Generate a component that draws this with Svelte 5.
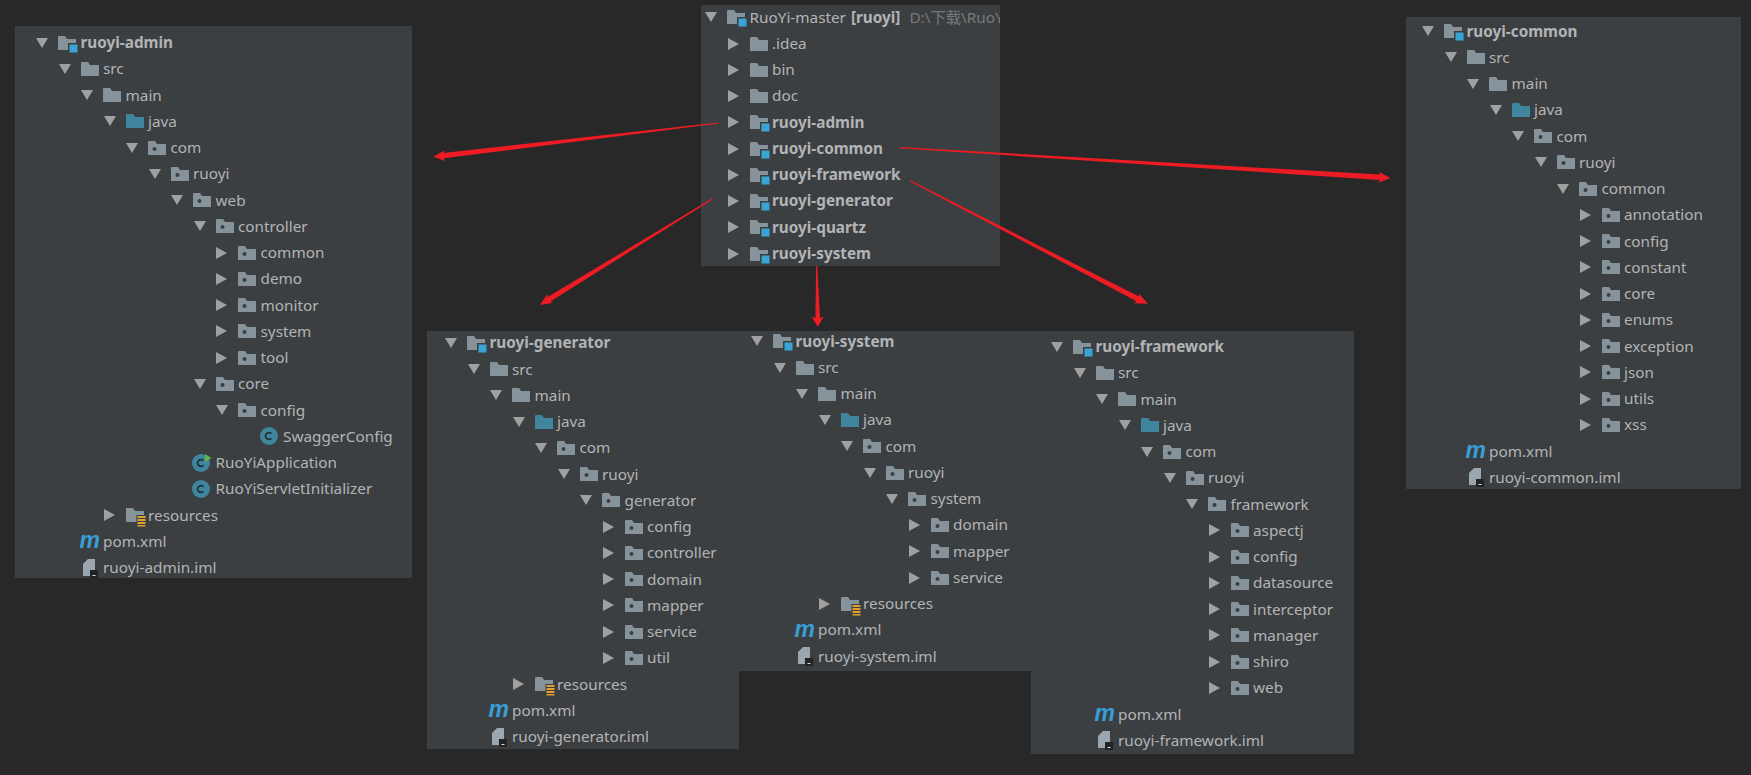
<script>
  const head = (name, pkg) => [
    [0, 'd', 'module', name, true],
    [1, 'd', 'folder', 'src'],
    [2, 'd', 'folder', 'main'],
    [3, 'd', 'java', 'java'],
    [4, 'd', 'pkg', 'com'],
    [5, 'd', 'pkg', 'ruoyi'],
    [6, 'd', 'pkg', pkg]
  ];
  const pkgs = (names) => names.map((n) => [7, 'r', 'pkg', n]);
  const tail = (name) => [
    [1, '', 'pom', 'pom.xml'],
    [1, '', 'iml', name + '.iml']
  ];
  const res = [3, 'r', 'res', 'resources'];

  const panels = [
    {
      id: 'admin',
      rows: [
        ...head('ruoyi-admin', 'web'),
        [7, 'd', 'pkg', 'controller'],
        ...['common', 'demo', 'monitor', 'system', 'tool'].map((n) => [8, 'r', 'pkg', n]),
        [7, 'd', 'pkg', 'core'],
        [8, 'd', 'pkg', 'config'],
        [9, '', 'class', 'SwaggerConfig'],
        [6, '', 'run', 'RuoYiApplication'],
        [6, '', 'class', 'RuoYiServletInitializer'],
        res,
        ...tail('ruoyi-admin')
      ]
    },
    {
      id: 'master',
      rows: [
        [0, 'd', 'module', 'RuoYi-master', false, '[ruoyi]', 'D:\\下载\\RuoYi-master'],
        [1, 'r', 'folder', '.idea'],
        [1, 'r', 'folder', 'bin'],
        [1, 'r', 'folder', 'doc'],
        ...['admin', 'common', 'framework', 'generator', 'quartz', 'system'].map((n) => [
          1, 'r', 'module', 'ruoyi-' + n, true
        ])
      ]
    },
    {
      id: 'common',
      rows: [
        ...head('ruoyi-common', 'common'),
        ...pkgs(['annotation', 'config', 'constant', 'core', 'enums', 'exception', 'json', 'utils', 'xss']),
        ...tail('ruoyi-common')
      ]
    },
    {
      id: 'generator',
      rows: [
        ...head('ruoyi-generator', 'generator'),
        ...pkgs(['config', 'controller', 'domain', 'mapper', 'service', 'util']),
        res,
        ...tail('ruoyi-generator')
      ]
    },
    {
      id: 'system',
      rows: [
        ...head('ruoyi-system', 'system'),
        ...pkgs(['domain', 'mapper', 'service']),
        res,
        ...tail('ruoyi-system')
      ]
    },
    {
      id: 'framework',
      rows: [
        ...head('ruoyi-framework', 'framework'),
        ...pkgs(['aspectj', 'config', 'datasource', 'interceptor', 'manager', 'shiro', 'web']),
        ...tail('ruoyi-framework')
      ]
    }
  ];

  const arrow = (s, t, b1, b2, w) => {
    const mid = [(b1[0] + b2[0]) / 2, (b1[1] + b2[1]) / 2];
    const neck = [mid[0] + (t[0] - mid[0]) * 0.12, mid[1] + (t[1] - mid[1]) * 0.12];
    const len = Math.hypot(t[0] - s[0], t[1] - s[1]);
    let p = [-(t[1] - s[1]) / len, (t[0] - s[0]) / len];
    if ((b1[0] - mid[0]) * p[0] + (b1[1] - mid[1]) * p[1] < 0) p = [-p[0], -p[1]];
    const at = (o, k) => `${(o[0] + p[0] * k).toFixed(1)},${(o[1] + p[1] * k).toFixed(1)}`;
    return [
      at(s, 0.6), at(neck, w), `${b1[0]},${b1[1]}`, `${t[0]},${t[1]}`, `${b2[0]},${b2[1]}`, at(neck, -w), at(s, -0.6)
    ].join(' ');
  };

  const arrows = [
    arrow([718.3, 123], [433.3, 156.7], [445, 150], [445, 161], 2.7),
    arrow([712.7, 198.7], [540, 305], [547.3, 294.3], [553.3, 302.7], 2.6),
    arrow([816.7, 265.7], [817.7, 326.7], [811.7, 316.7], [823.7, 316.7], 2.3),
    arrow([899.6, 147.7], [1390.5, 178], [1379, 171.7], [1378.5, 182.7], 2.7),
    arrow([910, 180.7], [1148, 303.7], [1138.6, 293.3], [1134, 303.3], 2.6)
  ];

  const folderPath = 'M0 1Q0 0 1 0H7L9 3H18V14H0Z';
</script>

<div class="canvas">
  {#each panels as panel}
    <section class="panel {panel.id}">
      <div class="tree">
        {#each panel.rows as [depth, toggle, kind, label, bold, tag, path]}
          <div class="row" style="--depth: {depth}">
            <span class="toggle">
              {#if toggle === 'd'}
                <svg width="12" height="10" viewBox="0 0 12 10"><path d="M0 0H12L6 10Z" /></svg>
              {:else if toggle === 'r'}
                <svg width="11" height="12" viewBox="0 0 11 12"><path d="M0 0L11 6L0 12Z" /></svg>
              {/if}
            </span>
            <span class="icon">
              {#if kind === 'folder'}
                <svg width="18" height="14" viewBox="0 0 18 14"><path class="fold" d={folderPath} /></svg>
              {:else if kind === 'java'}
                <svg width="18" height="14" viewBox="0 0 18 14"><path class="fold-java" d={folderPath} /></svg>
              {:else if kind === 'pkg'}
                <svg width="18" height="14" viewBox="0 0 18 14">
                  <path class="fold" d={folderPath} />
                  <circle class="hole" cx="6.5" cy="8" r="2" />
                </svg>
              {:else if kind === 'module'}
                <svg class="big" width="20" height="19" viewBox="0 0 20 19">
                  <path class="fold" d={folderPath} />
                  <rect class="hole" x="10" y="7" width="10" height="10" />
                  <rect class="mod" x="11.5" y="8.5" width="8" height="8" />
                </svg>
              {:else if kind === 'res'}
                <svg class="big" width="20" height="19" viewBox="0 0 20 19">
                  <path class="fold" d={folderPath} />
                  <rect class="hole" x="10.5" y="7" width="9.5" height="11" />
                  <rect class="stack" x="11.5" y="8" width="8" height="2" />
                  <rect class="stack" x="11.5" y="11" width="8" height="2" />
                  <rect class="stack" x="11.5" y="14" width="8" height="2" />
                  <rect class="stack" x="11.5" y="17" width="8" height="1.5" />
                </svg>
              {:else if kind === 'class' || kind === 'run'}
                <svg class="round" width="20" height="18" viewBox="0 0 20 18">
                  <circle class="cls" cx="9" cy="9" r="9" />
                  <path class="cls-c" d="M11.4 6.6A3.4 3.4 0 1 0 11.4 11.4" />
                  {#if kind === 'run'}
                    <path class="run" d="M13 0L19.5 4L13 8Z" />
                  {/if}
                </svg>
              {:else if kind === 'pom'}
                <span class="maven">m</span>
              {:else if kind === 'iml'}
                <svg class="big iml-icon" width="18" height="20" viewBox="0 0 18 20">
                  <path class="sheet" d="M3 6L8 1H15V18H3Z" />
                  <path class="hole" d="M3 5L7 1H3Z" />
                  <rect class="badge" x="10" y="12" width="8" height="8" />
                  <rect class="dash" x="12.5" y="17" width="3" height="1" />
                </svg>
              {/if}
            </span>
            <span class="label" class:bold>{label}</span>
            {#if tag}
              <span class="tag">[{tag.slice(1, -1)}]</span>
              <span class="path">{path}</span>
            {/if}
          </div>
        {/each}
      </div>
    </section>
  {/each}

  <svg class="arrows" width="1751" height="775" viewBox="0 0 1751 775">
    {#each arrows as points}
      <polygon {points} />
    {/each}
  </svg>
</div>

<style>
  :global(body) {
    margin: 0;
    background: #282828;
  }
  .canvas {
    position: relative;
    width: 1751px;
    height: 775px;
    overflow: hidden;
    background: #282828;
    font: 15.3px/1 "Noto Sans", "Noto Sans CJK SC", sans-serif;
    color: #b2b4b6;
  }
  .panel {
    position: absolute;
    background: #3c3f41;
  }
  .admin { left: 15px; top: 26px; width: 397px; height: 552px; --pad: 20px; --shift: 3.6px; }
  .master { left: 701px; top: 5px; width: 299px; height: 261px; --pad: 3px; --shift: -0.8px; overflow: hidden; }
  .common { left: 1406px; top: 17px; width: 335px; height: 472px; --pad: 15px; --shift: 1.1px; }
  .generator { left: 427px; top: 331px; width: 312px; height: 418px; --pad: 17px; --shift: -1.2px; }
  .system { left: 739px; top: 331px; width: 292px; height: 340px; --pad: 11px; --shift: -2.8px; }
  .framework { left: 1031px; top: 331px; width: 323px; height: 423px; --pad: 19px; --shift: 2.6px; }

  .tree {
    margin-top: var(--shift);
  }
  .row {
    display: flex;
    align-items: center;
    height: 26.25px;
    white-space: nowrap;
    padding-left: calc(var(--pad) + var(--depth) * 22.5px);
  }
  .toggle {
    flex: none;
    width: 23px;
    display: flex;
    align-items: center;
  }
  .toggle svg {
    display: block;
    margin-left: 1px;
    fill: #a0a0a0;
  }
  .icon {
    flex: none;
    width: 22.5px;
    height: 14px;
    position: relative;
    display: block;
  }
  .icon svg {
    display: block;
    overflow: visible;
  }
  .icon .round {
    margin-top: -2px;
    margin-left: -1px;
  }
  .icon .iml-icon {
    margin-top: -3px;
    margin-left: -1px;
  }
  .fold { fill: #87939a; }
  .fold-java { fill: #40859e; }
  .hole { fill: #3c3f41; }
  .mod { fill: #3aa5d4; }
  .stack { fill: #e0a030; }
  .cls { fill: #40859e; }
  .cls-c { fill: none; stroke: #22323a; stroke-width: 1.8; }
  .run { fill: #62b543; }
  .sheet { fill: #9aa7b0; }
  .badge { fill: #232323; }
  .dash { fill: #e0e0e0; }
  .maven {
    display: block;
    margin-left: -1px;
    margin-top: -4px;
    font: italic 700 23px/20px "Liberation Sans", sans-serif;
    color: #389fd6;
  }
  .label.bold, .tag {
    font-weight: 700;
  }
  .tag {
    margin-left: 5px;
  }
  .path {
    margin-left: 9px;
    color: #787878;
  }
  .arrows {
    position: absolute;
    left: 0;
    top: 0;
    pointer-events: none;
  }
  .arrows polygon {
    fill: #ed1c24;
  }
</style>
